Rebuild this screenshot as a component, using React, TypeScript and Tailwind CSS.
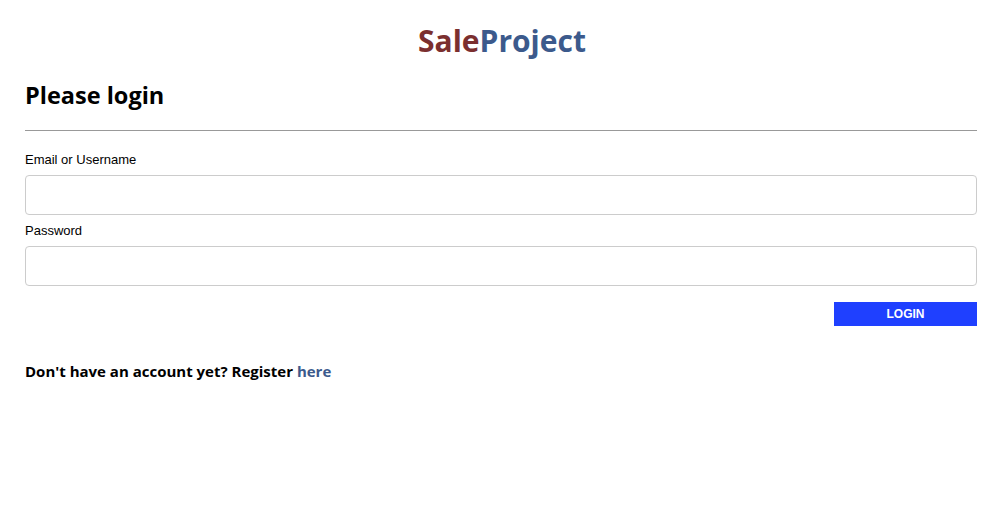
export default function App() {
  const head = { fontFamily: '"Open Sans", "DejaVu Sans", sans-serif' };
  const arial = { fontFamily: '"Liberation Sans", Arial, sans-serif' };
  return (
    <div className="w-[1004px] h-[516px] bg-white text-black">
      <div className="pt-[22px] text-center">
        <h1 className="text-[30px] leading-[38px] font-bold" style={head}>
          <span className="text-[#7b2f2f]">Sale</span>
          <span className="text-[#3c5a8c]">Project</span>
        </h1>
      </div>
      <div className="ml-[25px] mr-[27px]">
        <h2 className="mt-[20px] text-[23.5px] leading-[30px] font-bold" style={head}>Please login</h2>
        <hr className="mt-[20px] border-0 border-t border-[#999]" />
        <form className="mt-[21px]" style={arial} onSubmit={(e) => e.preventDefault()}>
          <label className="block text-[13px] leading-[15px]">Email or Username</label>
          <input className="mt-[8px] block w-full h-[40px] border border-[#cccccc] rounded-[4px]" />
          <label className="block mt-[8px] text-[13px] leading-[15px]">Password</label>
          <input type="password" className="mt-[8px] block w-full h-[40px] border border-[#cccccc] rounded-[4px]" />
          <div className="flex justify-end mt-[16px]">
            <button className="w-[143px] h-[24px] bg-[#1f40ff] text-white text-[12px] font-bold">LOGIN</button>
          </div>
        </form>
        <p className="mt-[35px] text-[15px] leading-[20px] font-bold" style={head}>
          Don't have an account yet? Register <a className="text-[#3c5a8c]">here</a>
        </p>
      </div>
    </div>
  );
}
